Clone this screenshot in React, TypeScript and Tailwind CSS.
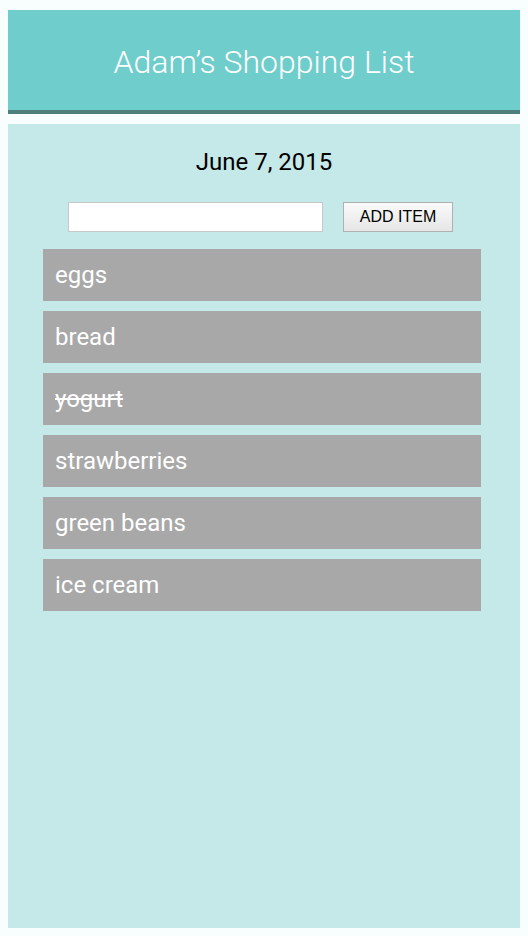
import React from "react";

const items = [
  { name: "eggs", done: false },
  { name: "bread", done: false },
  { name: "yogurt", done: true },
  { name: "strawberries", done: false },
  { name: "green beans", done: false },
  { name: "ice cream", done: false },
];

export default function App() {
  return (
    <div className="min-h-[936px] w-[528px] bg-[#f8fdfd] px-2 pt-[10px]" style={{ fontFamily: "Roboto, 'Liberation Sans', sans-serif" }}>
      <header className="flex h-[104px] items-center justify-center border-b-4 border-[#4e7f7b] bg-[#6fcdcc] pt-[3px]">
        <h1 className="text-[32px] font-light leading-none text-white">Adam’s Shopping List</h1>
      </header>
      <main className="mt-[10px] flex h-[804px] flex-col items-center bg-[#c5e8e8] pt-[24px]">
        <div className="text-[24px] leading-[28px] text-black">June 7, 2015</div>
        <div className="mt-[26px] flex items-center gap-[20px] pr-[7px]">
          <input type="text" className="h-[30px] w-[255px] border border-[#c8c8c8] bg-white outline-none" />
          <button className="h-[30px] w-[110px] border border-[#b0b0b0] bg-gradient-to-b from-[#fafafa] to-[#e6e6e6] text-[16px] text-black" style={{ fontFamily: "'Liberation Sans', Arial, sans-serif" }}>
            ADD ITEM
          </button>
        </div>
        <ul className="mt-[17px] ml-[35px] flex w-[438px] flex-col gap-[10px] self-start">
          {items.map((it) => (
            <li key={it.name} className="flex h-[52px] items-center bg-[#a8a8a8] px-3 text-[24px] font-normal text-white">
              <span className={it.done ? "line-through" : ""}>{it.name}</span>
            </li>
          ))}
        </ul>
      </main>
    </div>
  );
}
